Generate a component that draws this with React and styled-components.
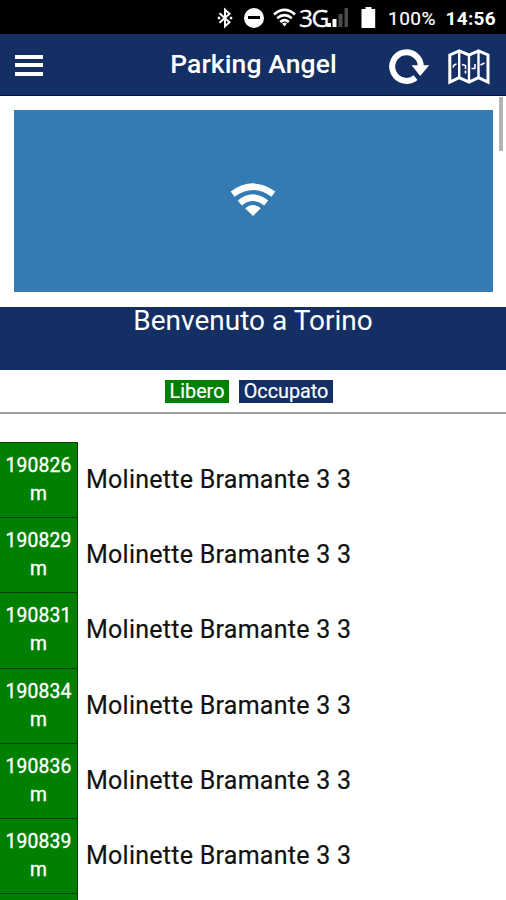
import styled, { createGlobalStyle } from 'styled-components';

const distances = [190826, 190829, 190831, 190834, 190836, 190839];

export default function App() {
    return (
        <>
            <GlobalStyle />
            <Screen>
                <StatusBar />
                <Header>
                    <MenuButton aria-label="Menu">
                        <span />
                        <span />
                        <span />
                    </MenuButton>
                    <Title>Parking Angel</Title>
                    <Actions>
                        <RefreshIcon />
                        <MapIcon />
                    </Actions>
                </Header>
                <Content>
                    <ScrollThumb />
                    <Banner>
                        <WifiIcon width={46} height={34} />
                    </Banner>
                    <Welcome>Benvenuto a Torino</Welcome>
                    <Legend>
                        <Tag $color="#008000" $width={64}>Libero</Tag>
                        <Tag $color="#142f64" $width={94}>Occupato</Tag>
                    </Legend>
                    <List>
                        {distances.map(distance => (
                            <Row key={distance}>
                                <Distance>
                                    <span>{distance}</span>
                                    <span>m</span>
                                </Distance>
                                <Place>Molinette Bramante 3 3</Place>
                            </Row>
                        ))}
                        <Row>
                            <Distance />
                        </Row>
                    </List>
                </Content>
            </Screen>
        </>
    )
}

function StatusBar() {
    return (
        <Status>
            <svg width="16" height="22" viewBox="0 0 16 22" fill="none" stroke="#fff" strokeWidth="2">
                <path d="M2.5 6.3 L12.5 15.2 L8 19.3 V2.7 L12.5 6.8 L2.5 15.7" />
                <path d="M.8 11h2.4M12.8 11h2.4" strokeWidth="2.4" />
            </svg>
            <Disturb />
            <SmallWifiIcon />
            <Network>3G</Network>
            <svg width="22" height="19" viewBox="0 0 22 19">
                <path d="M0 15h4v4H0zM5.5 11h4v8h-4z" fill="#fff" />
                <path d="M11.5 6h4v13h-4zM17.5 0h3.5v19h-3.5z" fill="#4b4b4b" />
            </svg>
            <svg width="15" height="22" viewBox="0 0 15 22">
                <path d="M4.5 0h6v2h3.7v19H.5V2h4z" fill="#fff" />
            </svg>
            <Percent>100%</Percent>
            <Clock>14:56</Clock>
        </Status>
    )
}

function SmallWifiIcon() {
    return (
        <svg width="23" height="19" viewBox="0 0 23 19">
            <g fill="none" stroke="#fff" strokeWidth="2.6">
                <path d="M1 6.4 Q11.5 -2.6 22 6.4" />
                <path d="M4.2 10.2 Q11.5 4 18.8 10.2" />
                <path d="M7.2 14 Q11.5 10.2 15.8 14" />
            </g>
            <path d="M9 15.6 Q11.5 13.8 14 15.6 L11.5 18.6z" fill="#fff" />
        </svg>
    )
}

function WifiIcon({ width, height }) {
    return (
        <svg width={width} height={height} viewBox="0 0 46 34">
            <g fill="none" stroke="#fff" strokeWidth="6.5">
                <path d="M2.6 11.2 Q23 -3.8 43.4 11.2" />
                <path d="M9.8 20 Q23 9.4 36.2 20" />
            </g>
            <path d="M15.2 25.2 Q23 18.8 30.8 25.2 L23 33z" fill="#fff" />
        </svg>
    )
}

function RefreshIcon() {
    return (
        <svg width="41" height="36" viewBox="0 0 41 36">
            <path d="M31.8 17.5 A14.3 14.3 0 1 0 26.6 28.6" fill="none" stroke="#fff" strokeWidth="6" />
            <path d="M22.6 16.2H40.2L31.2 27z" fill="#fff" />
        </svg>
    )
}

function MapIcon() {
    return (
        <svg width="42" height="36" viewBox="0 0 42 36" fill="none" stroke="#fff">
            <path d="M1.8 6 L11.2 1.8 L21 6 L30.5 1.8 L40 6 V33.2 L30.5 28.7 L21 33.2 L11.2 28.7 L1.8 33.2z" strokeWidth="3" />
            <path d="M11.2 2v26.5M21 6v27M30.5 2v26.5" strokeWidth="2.4" />
            <path d="M5 18.5q.5-3 3.5-3.5M14 15.5l3.5 1v3.5M17.5 21.5v3M23.5 19.5h4M27 15v4M32.5 16l4-2" strokeWidth="1.6" />
        </svg>
    )
}

const GlobalStyle = createGlobalStyle`
    * {
        box-sizing: border-box;
    }
    body {
        margin: 0;
        overflow: hidden;
        font-family: Roboto, sans-serif;
        background: #ffffff;
    }
    svg {
        display: block;
        flex-shrink: 0;
    }
`;

const Screen = styled.div`
    width: 506px;
    height: 900px;
    overflow: hidden;
`;

const Status = styled.div`
    height: 34px;
    padding: 1px 10px 0 217px;
    display: flex;
    align-items: center;
    background: #000000;
    color: #ffffff;
`;

const Disturb = styled.div`
    width: 20px;
    height: 20px;
    margin: 0 9px 0 11px;
    flex-shrink: 0;
    display: flex;
    align-items: center;
    justify-content: center;
    border-radius: 50%;
    background: #ffffff;

    &::after {
        content: '';
        width: 12px;
        height: 3px;
        background: #000000;
    }
`;

const Network = styled.span`
    width: 28px;
    margin-left: 3px;
    padding-bottom: 1px;
    font-family: "Open Sans", sans-serif;
    font-size: 24.5px;
    letter-spacing: -1.6px;
    -webkit-text-stroke: 0.3px #ffffff;

    & + svg {
        margin-right: 12px;
    }
`;

const Percent = styled.span`
    width: 59px;
    margin-left: 12px;
    padding-top: 2px;
    font-size: 19px;
    letter-spacing: 0.5px;
    -webkit-text-stroke: 0.2px #ffffff;
`;

const Clock = styled.span`
    padding-top: 2px;
    font-size: 19px;
    font-weight: 700;
    letter-spacing: 0.3px;
`;

const Header = styled.header`
    height: 62px;
    padding: 0 16px 0 15px;
    display: flex;
    align-items: center;
    justify-content: space-between;
    background: #142f64;
    border-bottom: 1px solid #06114e;
    color: #ffffff;
`;

const MenuButton = styled.button`
    width: 28px;
    padding: 1px 0 0;
    margin-right: 75px;
    display: flex;
    flex-direction: column;
    gap: 4.5px;
    border: none;
    background: none;

    span {
        height: 4px;
        background: #ffffff;
    }
`;

const Title = styled.h1`
    margin: 0;
    padding-bottom: 2px;
    font-size: 26.5px;
    font-weight: 500;
    letter-spacing: 0.1px;
    white-space: nowrap;
`;

const Actions = styled.div`
    display: flex;
    gap: 18px;
    padding-top: 4px;
`;

const Content = styled.main`
    position: relative;
    padding-top: 14.4px;
`;

const ScrollThumb = styled.div`
    position: absolute;
    top: 1px;
    right: 3px;
    width: 4px;
    height: 54px;
    background: #b3b3b3;
`;

const Banner = styled.div`
    height: 182px;
    margin: 0 13.5px 15px 14.4px;
    display: flex;
    align-items: center;
    justify-content: center;
    background: #347bb4;

    svg {
        margin-top: -3px;
    }
`;

const Welcome = styled.div`
    height: 62.6px;
    background: #142f64;
    color: #ffffff;
    font-size: 28px;
    line-height: 28px;
    text-align: center;
`;

const Legend = styled.div`
    height: 44px;
    padding-top: 10px;
    padding-right: 8px;
    display: flex;
    justify-content: center;
    gap: 10px;
    border-bottom: 2px solid #a0a0a0;
`;

const Tag = styled.span`
    width: ${({ $width }) => $width}px;
    height: 23px;
    background: ${({ $color }) => $color};
    color: #ffffff;
    font-size: 19.8px;
    line-height: 23px;
    text-align: center;
    -webkit-text-stroke: 0.2px #ffffff;
`;

const List = styled.div`
    padding-top: 28px;
`;

const Row = styled.div`
    height: 75.2px;
    display: flex;
    align-items: center;
`;

const Distance = styled.div`
    width: 78px;
    height: 100%;
    padding-top: 9px;
    display: flex;
    flex-direction: column;
    align-items: center;
    border: 1px solid #063f06;
    border-width: 1px 1px 0 0;
    background: #008000;
    color: #ffffff;
    font-size: 19.3px;
    letter-spacing: 0.2px;
    line-height: 28px;
    -webkit-text-stroke: 0.35px #ffffff;
`;

const Place = styled.span`
    padding-left: 8px;
    color: #111111;
    font-size: 25px;
    letter-spacing: 0.26px;
    white-space: nowrap;
    -webkit-text-stroke: 0.2px #111111;
`;
